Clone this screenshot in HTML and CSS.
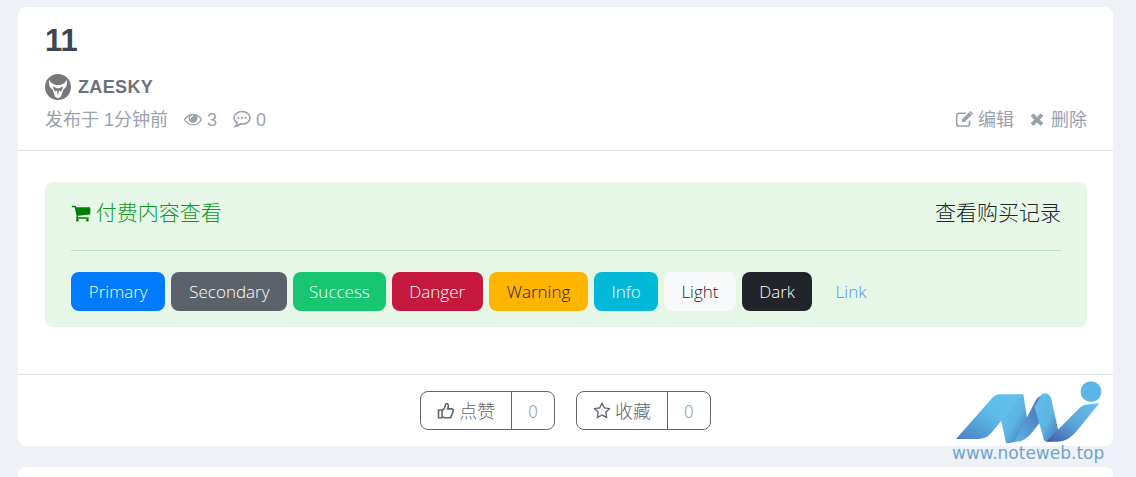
FILE: index.html
```html
<!DOCTYPE html>
<html lang="zh-CN">
<head>
<meta charset="utf-8">
<title>11</title>
<link rel="stylesheet" href="styles.css">
</head>
<body>
<main class="page">
  <article class="card">
    <header class="head">
      <h1 class="title">11</h1>
      <div class="author">
        <svg class="avatar" viewBox="0 0 26 26"><circle cx="13" cy="13" r="13" fill="#777"/><path d="M4 5.500C3.500 11 5 14 7.500 15.500L10 22.500 13 24.500 16 22.500 18.500 15.500C21 14 22.500 11 22 5.500 20 9.500 17 11 13 11S6 9.500 4 5.500z" fill="#fff"/><path d="M7.500 12.500 13 14.500 18.500 12.500 16 17.500 14 16.500 13 22 12 16.500 10 17.500z" fill="#777"/></svg>
        <span class="name">ZAESKY</span>
      </div>
      <div class="meta">
        <div class="meta-left">
          <span>发布于 1分钟前</span>
          <span class="stat"><svg class="ico" viewBox="0 0 1792 1792"><path d="M1664 960q-152-236-381-353 61 104 61 225 0 185-131.500 316.500t-316.500 131.500-316.500-131.500-131.500-316.500q0-121 61-225-229 117-381 353 133 205 333.500 326.500t434.500 121.500 434.500-121.500 333.500-326.500zm-720-384q0-20-14-34t-34-14q-125 0-214.500 89.500t-89.500 214.500q0 20 14 34t34 14 34-14 14-34q0-86 61-147t147-61q20 0 34-14t14-34zm848 384q0 34-20 69-140 230-376.500 368.500t-499.500 138.500-499.500-139-376.500-368q-20-35-20-69t20-69q140-229 376.500-368t499.500-139 499.500 139 376.500 368q20 35 20 69z"/></svg> 3</span>
          <span class="stat"><svg class="ico" viewBox="0 0 18 18"><path class="line" d="M9 1.500c4.400 0 8 2.800 8 6.300s-3.600 6.300-8 6.300c-.6 0-1.200-.1-1.800-.2-1.100 1.200-2.600 2.100-4.700 2.500 1-1.100 1.500-2.300 1.700-3.500C2.300 11.700 1 9.900 1 7.800 1 4.300 4.600 1.500 9 1.500z"/><circle cx="5.400" cy="7.800" r="1.100"/><circle cx="9" cy="7.800" r="1.100"/><circle cx="12.600" cy="7.800" r="1.100"/></svg> 0</span>
        </div>
        <div class="meta-right">
          <a class="action"><svg class="ico" viewBox="0 0 18 18"><path class="line" d="M14.500 10.500v3.200c0 1.300-1 2.300-2.300 2.300H4c-1.300 0-2.300-1-2.300-2.300V5.500c0-1.300 1-2.300 2.300-2.300h7"/><path d="M7 9.300 14 2.300l2.700 2.700-7 7H7zM14.800 1.500c.4-.4.900-.4 1.300 0l1.400 1.400c.4.400.4.900 0 1.300l-.5.500-2.700-2.700z"/></svg> 编辑</a>
          <a class="action"><svg class="ico" viewBox="0 0 1792 1792"><path d="M1490 1322q0 40-28 68l-136 136q-28 28-68 28t-68-28l-294-294-294 294q-28 28-68 28t-68-28l-136-136q-28-28-28-68t28-68l294-294-294-294q-28-28-28-68t28-68l136-136q28-28 68-28t68 28l294 294 294-294q28-28 68-28t68 28l136 136q28 28 28 68t-28 68l-294 294 294 294q28 28 28 68z"/></svg> 删除</a>
        </div>
      </div>
    </header>
    <section class="body">
      <div class="paid">
        <div class="paid-head">
          <span class="paid-title"><svg class="cart" viewBox="0 0 1792 1792"><path d="M704 1536q0 52-38 90t-90 38-90-38-38-90 38-90 90-38 90 38 38 90zm896 0q0 52-38 90t-90 38-90-38-38-90 38-90 90-38 90 38 38 90zm128-1088v512q0 24-16.500 42.500t-40.500 21.500l-1044 122q13 60 13 70 0 16-24 64h920q26 0 45 19t19 45-19 45-45 19h-1024q-26 0-45-19t-19-45q0-11 8-31.500t16-36 21.500-40 15.500-29.500l-177-823h-204q-26 0-45-19t-19-45 19-45 45-19h256q16 0 28.500 6.500t19.500 15.500 13 24.500 8 26 5.500 29.500 4.500 26h1201q26 0 45 19t19 45z"/></svg> 付费内容查看</span>
          <a class="paid-log">查看购买记录</a>
        </div>
        <div class="btns">
          <a class="btn primary">Primary</a>
          <a class="btn secondary">Secondary</a>
          <a class="btn success">Success</a>
          <a class="btn danger">Danger</a>
          <a class="btn warning">Warning</a>
          <a class="btn info">Info</a>
          <a class="btn light">Light</a>
          <a class="btn dark">Dark</a>
          <a class="btn link">Link</a>
        </div>
      </div>
    </section>
    <footer class="foot">
      <div class="group">
        <span class="cell"><svg class="ico" viewBox="0 0 18 18"><path class="line" d="M1.500 8h3.600v7.800H1.500zM5.100 8.500c1.500-.8 2.700-2.500 3-4.200.2-1 .2-2.800 1.300-2.800 1.500 0 2.100 1.500 2 2.900-.1 1-.5 1.800-.8 2.500h4.100c1 0 1.600.8 1.600 1.600 0 .6-.3 1-.6 1.300.3.900 0 1.700-.6 2.100.1.900-.2 1.600-.9 2 0 1.200-.8 1.800-2 1.800H9c-1.500 0-2.600-.6-3.900-.9"/></svg> 点赞</span>
        <span class="count">0</span>
      </div>
      <div class="group">
        <span class="cell"><svg class="ico" viewBox="0 0 1792 1792"><path d="M1201 1004l306-297-422-62-189-382-189 382-422 62 306 297-73 421 378-199 377 199zm527-357q0 22-26 48l-363 354 86 500q1 7 1 20 0 50-41 50-19 0-40-12l-449-236-449 236q-22 12-40 12-21 0-31.500-14.500t-10.500-35.500q0-6 2-20l86-500-364-354q-25-27-25-48 0-37 56-46l502-73 225-455q19-41 49-41t49 41l225 455 502 73q56 9 56 46z"/></svg> 收藏</span>
        <span class="count">0</span>
      </div>
    </footer>
  </article>
  <div class="card next"></div>
</main>
<aside class="logo">
  <svg class="logo-mark" viewBox="0 0 600 210">
    <defs>
      <linearGradient id="g1" x1="0" y1="1" x2="1" y2="0"><stop offset="0" stop-color="#4a7fc2"/><stop offset=".55" stop-color="#5fbce8"/><stop offset="1" stop-color="#62c0ea"/></linearGradient>
      <linearGradient id="g2" x1="0" y1="0" x2="1" y2="1"><stop offset="0" stop-color="#62c0ea"/><stop offset=".55" stop-color="#5cb4e4"/><stop offset="1" stop-color="#4468b4"/></linearGradient>
      <linearGradient id="g3" x1="0" y1="1" x2="1" y2="0"><stop offset="0" stop-color="#5fb6e6"/><stop offset="1" stop-color="#4659a8"/></linearGradient>
      <linearGradient id="g4" x1="0" y1="1" x2="1" y2="0"><stop offset="0" stop-color="#4659a8"/><stop offset=".5" stop-color="#5aa8dc"/><stop offset="1" stop-color="#62c0ea"/></linearGradient>
    </defs>
    <path d="M190 108 232 60 262 58 275 140 258 185Q240 205 210 205z" fill="url(#g2)"/>
    <path d="M60 192 172 65Q180 58 195 58H262L165 175Q150 192 128 192z" fill="url(#g1)"/>
    <path d="M235 200 300 75Q312 58 332 56L345 100 290 170Q265 203 235 200z" fill="url(#g3)"/>
    <path d="M318 56Q338 52 345 68L372 190Q350 205 325 198L295 95z" fill="url(#g2)"/>
    <path d="M330 200 430 100Q442 88 460 88L490 85 425 165Q395 203 360 200z" fill="url(#g4)"/>
    <circle cx="465" cy="50" r="31" fill="#5bb6e6"/>
  </svg>
  <span class="logo-text">www.noteweb.top</span>
</aside>
```
FILE: styles.css
```css
* { box-sizing: border-box; }
html, body { margin: 0; height: 100%; overflow: hidden; }
body {
  position: relative;
  background: #eef1f6;
  font-family: "Open Sans", "Noto Sans CJK SC", sans-serif;
  font-weight: 300;
  color: #212529;
}
.page { padding: 7px 23px 0 18px; display: flex; flex-direction: column; gap: 21px; }
.card { background: #fff; border-radius: 8px; height: 439px; display: flex; flex-direction: column; }
.card.next { height: 10px; flex: none; border-radius: 8px 8px 0 0; }
.head { height: 144px; padding: 15px 26px 0 27px; border-bottom: 1px solid #dee2e6; flex: none; }
.title { margin: 0; height: 36px; font: 700 31px/38px "Liberation Sans", sans-serif; color: #3e4450; }
.author { display: flex; align-items: center; gap: 7px; margin-top: 16px; height: 26px; }
.avatar { width: 26px; height: 26px; flex: none; }
.name { font: 700 18px/26px "Liberation Sans", sans-serif; letter-spacing: .35px; color: #6c727c; }
.meta { display: flex; justify-content: space-between; align-items: center; margin-top: 8px; height: 24px; color: #9aa1ab; font: 400 18px/24px "Liberation Sans", "Noto Sans CJK SC", sans-serif; }
.meta-left { display: flex; gap: 16px; }
.meta-right { display: flex; gap: 14px; }
.ico { width: 18px; height: 18px; fill: currentColor; vertical-align: -2px; }
.line { fill: none; stroke: currentColor; stroke-width: 1.600; }
.body { flex: 1; padding: 31px 26px 0 27px; }
.paid { background: #e6f7e8; border-radius: 8px; height: 145px; padding: 16px 26px 0; }
.paid-head { display: flex; justify-content: space-between; align-items: center; height: 53px; padding-bottom: 26px; border-bottom: 1px solid #b9e2bc; font: 300 21px/30px "Noto Sans CJK SC", sans-serif; }
.paid-title { color: #0d9a1e; }
.cart { width: 20px; height: 20px; fill: #008000; vertical-align: -3px; }
.paid-log { color: #212529; }
.btns { display: flex; gap: 6px; margin-top: 21px; }
.btn { height: 39px; padding: 0 17.300px; border-radius: 8px; font-size: 17px; line-height: 40px; color: #fff; white-space: nowrap; }
.primary { background: #007bff; padding: 0 17.800px; }
.secondary { background: #5c6269; padding: 0 17.800px; }
.success { background: #17c671; padding: 0 15.800px; }
.danger { background: #c4183c; padding: 0 17.800px; }
.warning { background: #ffb400; color: #212529; padding: 0 17.800px; }
.info { background: #00b8d8; }
.light { background: #f8f9fa; color: #212529; }
.dark { background: #212529; }
.link { color: #4f8cff; }
.foot { height: 72px; border-top: 1px solid #dee2e6; flex: none; display: flex; justify-content: center; align-items: flex-start; gap: 21px; padding: 16px 0 0 0; }
.group { display: flex; height: 39px; border: 1px solid #5f6670; border-radius: 8px; font: 300 18px/37px "Noto Sans CJK SC", sans-serif; color: #5f6670; }
.cell { padding: 0 16px; border-right: 1px solid #5f6670; white-space: nowrap; }
.count { padding: 0 16px; color: #9aa1ab; }
.logo { position: absolute; left: 936px; top: 375px; width: 200px; display: flex; flex-direction: column; align-items: flex-start; }
.logo-mark { width: 200px; height: 70px; }
.logo-text { margin-left: 16px; font: 400 17px/16px "DejaVu Sans", sans-serif; color: #6fa3cf; }
```
